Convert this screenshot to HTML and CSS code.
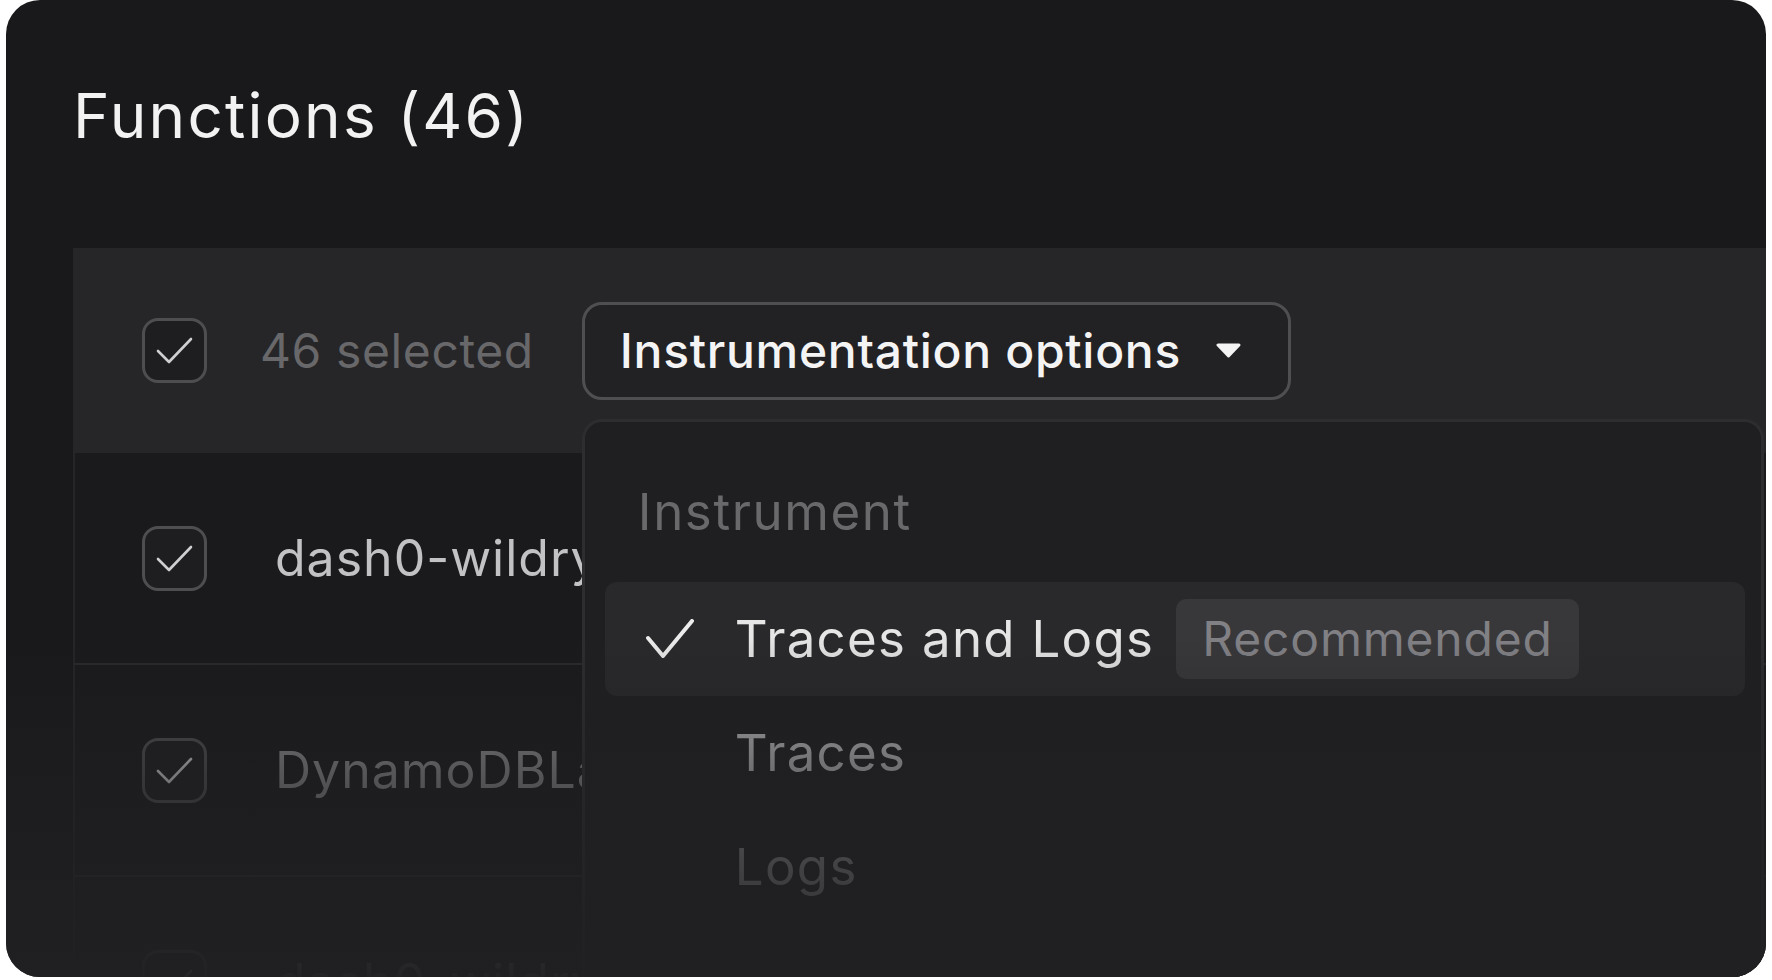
FILE: index.html
```html
<!DOCTYPE html>
<html lang="en">
<head>
    <meta charset="UTF-8">
    <meta name="viewport" content="width=device-width, initial-scale=1.0">
    <title>Functions</title>
    <link rel="stylesheet" href="styles.css">
</head>
<body>
    <div class="card">
        <h1 class="title">Functions (46)</h1>

        <div class="table">
            <div class="table-head">
                <span class="checkbox">
                    <svg width="59" height="59" viewBox="0 0 59 59"><polyline points="13,30 24,41 46,18" /></svg>
                </span>
                <span class="selected-count">46 selected</span>

                <div class="menu-anchor">
                    <button class="menu-button">
                        Instrumentation options
                        <svg class="caret" width="25" height="15" viewBox="0 0 25 15"><path d="M2 2 H23 L12.5 13 Z" /></svg>
                    </button>

                    <div class="menu">
                        <div class="menu-label">Instrument</div>
                        <div class="menu-item active">
                            <svg class="tick" width="48" height="40" viewBox="0 0 48 40"><polyline points="2,19 17,37 46,2" /></svg>
                            <span>Traces and Logs</span>
                            <span class="badge">Recommended</span>
                        </div>
                        <div class="menu-item traces">
                            <span class="tick-space"></span>
                            <span>Traces</span>
                        </div>
                        <div class="menu-item logs">
                            <span class="tick-space"></span>
                            <span>Logs</span>
                        </div>
                    </div>
                </div>
            </div>

            <div class="row">
                <span class="checkbox">
                    <svg width="59" height="59" viewBox="0 0 59 59"><polyline points="13,30 24,41 46,18" /></svg>
                </span>
                <span class="fn-name">dash0-wildrydes-requestUnicorn</span>
            </div>
            <div class="row dim">
                <span class="checkbox">
                    <svg width="59" height="59" viewBox="0 0 59 59"><polyline points="13,30 24,41 46,18" /></svg>
                </span>
                <span class="fn-name">DynamoDBLambdaHandler</span>
            </div>
            <div class="row dim">
                <span class="checkbox">
                    <svg width="59" height="59" viewBox="0 0 59 59"><polyline points="13,30 24,41 46,18" /></svg>
                </span>
                <span class="fn-name">dash0-wildrydes-listRides</span>
            </div>
        </div>

        <!-- list fades out towards the bottom edge -->
        <div class="fade"></div>
    </div>
</body>
</html>
```

FILE: styles.css
```css
body {
    margin: 0;
    padding: 0;
    background-color: #ffffff;
    font-family: Inter, "Noto Sans", sans-serif;
}

.card {
    position: relative;
    width: 1760px;
    height: 977px;
    margin-left: 6px;
    padding: 80px 0 0 67px;
    box-sizing: border-box;
    background-color: #19191b;
    border-radius: 34px;
    overflow: hidden;
}

.title {
    margin: 0;
    font-size: 62px;
    line-height: 72px;
    font-weight: 400;
    letter-spacing: 2.2px;
    color: #f2f2f3;
}

.table {
    margin-top: 96px;
}

.table-head {
    display: flex;
    align-items: center;
    height: 205px;
    padding-left: 69px;
    background-color: #262628;
}

.checkbox {
    flex: none;
    width: 65px;
    height: 65px;
    border: 3px solid #4e4e51;
    border-radius: 16px;
    box-sizing: border-box;
    background-color: #1e1e20;
}

.checkbox svg {
    display: block;
    fill: none;
    stroke: #cfcfd1;
    stroke-width: 2.6;
    stroke-linecap: round;
    stroke-linejoin: round;
}

.selected-count {
    margin: 0 48px 0 53px;
    font-size: 48px;
    letter-spacing: 0.6px;
    color: #68686b;
}

.menu-anchor {
    position: relative;
}

.menu-button {
    display: flex;
    align-items: center;
    gap: 35px;
    height: 98px;
    padding: 0 47px 0 35px;
    border: 3px solid #4f4f52;
    border-radius: 20px;
    background-color: #222224;
    font-family: inherit;
    font-size: 48px;
    font-weight: 500;
    letter-spacing: 0.7px;
    color: #f4f4f5;
}

.caret {
    fill: #f4f4f5;
    stroke: #f4f4f5;
    stroke-width: 3;
    stroke-linejoin: round;
}

.menu {
    position: absolute;
    top: 117px;
    left: 0;
    width: 1182px;
    height: 700px;
    padding: 20px 16px 0 20px;
    box-sizing: border-box;
    background-color: #1f1f21;
    border: 3px solid #2d2d2f;
    border-radius: 20px;
    z-index: 2;
}

.menu-label {
    padding: 41px 0 0 33px;
    margin-bottom: 41px;
    font-size: 51px;
    line-height: 58px;
    letter-spacing: 1.6px;
    color: #69696c;
}

.menu-item {
    display: flex;
    align-items: center;
    height: 114px;
    padding-left: 41px;
    font-size: 51px;
    line-height: 58px;
    letter-spacing: 1.3px;
    color: #e6e6e7;
}

.menu-item.active {
    background-color: #29292b;
    border-radius: 12px;
}

.menu-item.traces {
    color: #b8b8bb;
}

.menu-item.logs {
    color: #9a9a9d;
}

.tick {
    flex: none;
    margin-right: 41px;
    fill: none;
    stroke: #ececed;
    stroke-width: 4;
    stroke-linecap: round;
    stroke-linejoin: round;
}

.tick-space {
    flex: none;
    width: 48px;
    margin-right: 41px;
}

.badge {
    margin-left: 22px;
    padding: 11px 26px;
    background-color: #38383b;
    border-radius: 10px;
    font-size: 48px;
    letter-spacing: 0.8px;
    color: #818185;
}

.row {
    display: flex;
    align-items: center;
    gap: 68px;
    height: 210px;
    padding-left: 67px;
    border-top: 2px solid #2a2a2c;
    border-left: 2px solid #252527;
    background-color: #1a1a1c;
}

.table-head + .row {
    border-top: none;
}

/* name column ends where the instrumentation menu begins */
.fn-name {
    width: 308px;
    overflow: hidden;
    font-size: 50px;
    letter-spacing: 1px;
    color: #c2c2c4;
    white-space: nowrap;
}

.row.dim .fn-name {
    color: #8a8a8d;
}

.fade {
    position: absolute;
    left: 0;
    right: 0;
    bottom: 0;
    height: 340px;
    background: linear-gradient(to bottom, rgba(32, 32, 34, 0) 0%, rgba(32, 32, 34, 0.55) 45%, rgba(32, 32, 34, 0.97) 100%);
    z-index: 3;
    pointer-events: none;
}
```
